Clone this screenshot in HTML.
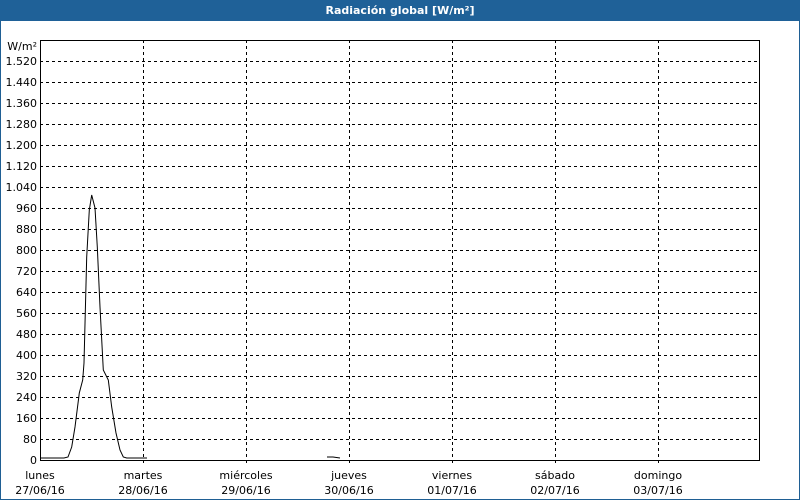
<!DOCTYPE html>
<html><head><meta charset="utf-8"><style>
html,body{margin:0;padding:0;width:800px;height:500px;overflow:hidden;background:#fff;font-family:"DejaVu Sans","Liberation Sans",sans-serif;}
.frame{position:absolute;left:0;top:0;width:798px;height:498px;border:1px solid #1f5f94;}
.title{position:absolute;left:0;top:0;width:800px;height:21px;background:#1f6198;color:#fff;font-weight:bold;font-size:11px;text-align:center;line-height:21px;}
svg{position:absolute;left:0;top:0}
</style></head><body>
<div class="frame"></div>
<div class="title">Radiación global [W/m²]</div>
<svg width="800" height="500" font-family="DejaVu Sans, Liberation Sans, sans-serif" font-size="11" fill="#000">
<g stroke="#000" stroke-dasharray="3,3" stroke-width="1">
<line x1="40" x2="760" y1="439.5" y2="439.5"/><line x1="40" x2="760" y1="418.5" y2="418.5"/><line x1="40" x2="760" y1="397.5" y2="397.5"/><line x1="40" x2="760" y1="376.5" y2="376.5"/><line x1="40" x2="760" y1="355.5" y2="355.5"/><line x1="40" x2="760" y1="334.5" y2="334.5"/><line x1="40" x2="760" y1="313.5" y2="313.5"/><line x1="40" x2="760" y1="292.5" y2="292.5"/><line x1="40" x2="760" y1="271.5" y2="271.5"/><line x1="40" x2="760" y1="250.5" y2="250.5"/><line x1="40" x2="760" y1="229.5" y2="229.5"/><line x1="40" x2="760" y1="208.5" y2="208.5"/><line x1="40" x2="760" y1="187.5" y2="187.5"/><line x1="40" x2="760" y1="166.5" y2="166.5"/><line x1="40" x2="760" y1="145.5" y2="145.5"/><line x1="40" x2="760" y1="124.5" y2="124.5"/><line x1="40" x2="760" y1="103.5" y2="103.5"/><line x1="40" x2="760" y1="82.5" y2="82.5"/><line x1="40" x2="760" y1="61.5" y2="61.5"/>
<line x1="143.5" x2="143.5" y1="40" y2="465"/><line x1="246.5" x2="246.5" y1="40" y2="465"/><line x1="349.5" x2="349.5" y1="40" y2="465"/><line x1="452.5" x2="452.5" y1="40" y2="465"/><line x1="555.5" x2="555.5" y1="40" y2="465"/><line x1="658.5" x2="658.5" y1="40" y2="465"/>
</g>
<rect x="40.5" y="40.5" width="719" height="420" fill="none" stroke="#000"/>
<polyline fill="none" stroke="#000" points="41,458 64,458 68,457 71.7,447 75,427 79.3,393 82.7,380 84,363 86.7,257 89.3,210 91.7,195 95,208 97.3,247 100,307 103.3,370 108.3,380 111.7,407 116,433 120,450 123.3,457 126.7,458 147,458"/>
<polyline fill="none" stroke="#000" points="327,457 333,457 340,458"/>
<g text-anchor="end">
<text x="37" y="50">W/m²</text>
<text x="37" y="65">1.520</text><text x="37" y="86">1.440</text><text x="37" y="107">1.360</text><text x="37" y="128">1.280</text><text x="37" y="149">1.200</text><text x="37" y="170">1.120</text><text x="37" y="191">1.040</text><text x="37" y="212">960</text><text x="37" y="233">880</text><text x="37" y="254">800</text><text x="37" y="275">720</text><text x="37" y="296">640</text><text x="37" y="317">560</text><text x="37" y="338">480</text><text x="37" y="359">400</text><text x="37" y="380">320</text><text x="37" y="401">240</text><text x="37" y="422">160</text><text x="37" y="443">80</text><text x="37" y="464">0</text>
</g>
<g text-anchor="middle">
<text x="40" y="479">lunes</text><text x="40" y="494">27/06/16</text>
<text x="143" y="479">martes</text><text x="143" y="494">28/06/16</text>
<text x="246" y="479">miércoles</text><text x="246" y="494">29/06/16</text>
<text x="349" y="479">jueves</text><text x="349" y="494">30/06/16</text>
<text x="452" y="479">viernes</text><text x="452" y="494">01/07/16</text>
<text x="555" y="479">sábado</text><text x="555" y="494">02/07/16</text>
<text x="658" y="479">domingo</text><text x="658" y="494">03/07/16</text>
</g>
</svg>
</body></html>
